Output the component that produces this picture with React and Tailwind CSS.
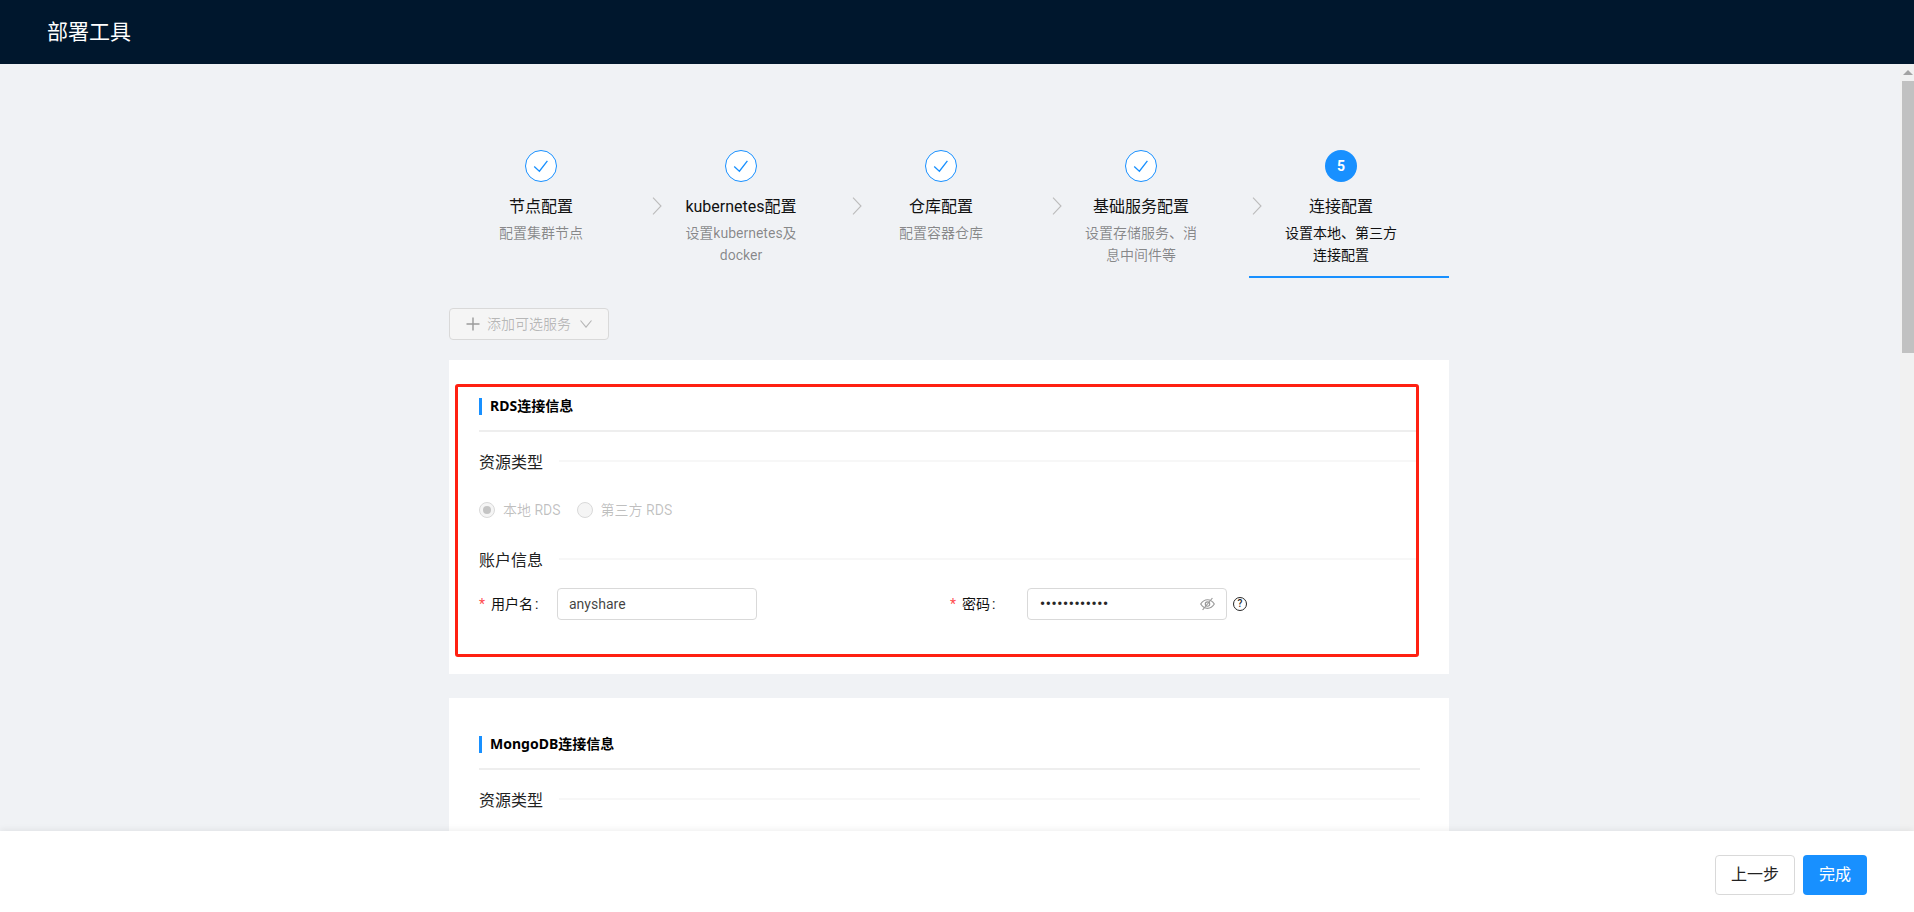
import React from "react";

const FONT = "font-['Roboto','Noto_Sans_CJK_SC',sans-serif]";

function Check() {
  return (
    <svg width="16" height="16" viewBox="0 0 16 16" fill="none" stroke="#1890ff" strokeWidth="1.3">
      <path d="M1.2 8.6 L6.4 13.2 L14.4 2.9" />
    </svg>
  );
}

function Chevron() {
  return (
    <svg width="10" height="18" viewBox="0 0 10 18" fill="none" stroke="#bcbcbc" strokeWidth="1.1">
      <path d="M1 0.6 L9 9 L1 17.4" />
    </svg>
  );
}

const STEPS = [
  { title: "节点配置", desc: "配置集群节点" },
  { title: "kubernetes配置", desc: "设置kubernetes及docker" },
  { title: "仓库配置", desc: "配置容器仓库" },
  { title: "基础服务配置", desc: "设置存储服务、消息中间件等" },
  { title: "连接配置", desc: "设置本地、第三方连接配置", active: true },
];

function Step({ step, index }) {
  return (
    <div className={`flex w-[200px] h-[128px] ${step.active ? "border-b-2 border-[#1890ff]" : ""}`}>
      <div className="w-4 flex-none pt-[47px] flex justify-center">{index > 0 && <Chevron />}</div>
      <div className="w-[152px] flex-none flex flex-col items-center">
        {step.active ? (
          <div className="w-8 h-8 rounded-full bg-[#1890ff] flex items-center justify-center text-white text-sm font-bold">
            5
          </div>
        ) : (
          <div className="w-8 h-8 rounded-full bg-white border border-[#1890ff] flex items-center justify-center">
            <Check />
          </div>
        )}
        <div className="mt-[13px] text-base leading-6 text-[#111111] whitespace-nowrap">{step.title}</div>
        <div className={`mt-[3px] w-[120px] text-center text-sm leading-[22px] break-words ${step.active ? "text-[#111111]" : "text-black/45"}`}>
          {step.desc}
        </div>
      </div>
    </div>
  );
}

function SectionHeading({ children }) {
  return (
    <div className="flex items-center gap-4 h-6">
      <div className="text-base leading-6 text-[#222222] whitespace-nowrap translate-y-[1px]">{children}</div>
      <div className="flex-1 h-[2px] bg-[#f7f7f7] -translate-y-[1px]" />
    </div>
  );
}

function CardTitle({ children }) {
  return (
    <>
      <div className="flex items-center h-[17px] border-l-[3px] border-[#1890ff] pl-2">
        <span className="font-['Noto_Sans','Noto_Sans_CJK_SC',sans-serif] text-sm font-bold text-black leading-[17px] -translate-y-[1px]">{children}</span>
      </div>
      <div className="mt-[15px] h-[2px] bg-[#eeeeee]" />
    </>
  );
}

function Radio({ checked, label }) {
  return (
    <div className="flex items-center gap-2">
      <div className="w-4 h-4 rounded-full border border-[#d9d9d9] bg-[#f5f5f5] flex items-center justify-center">
        {checked && <div className="w-2 h-2 rounded-full bg-black/20" />}
      </div>
      <span className="text-sm leading-[22px] text-black/25 whitespace-nowrap">{label}</span>
    </div>
  );
}

function Label({ children }) {
  return (
    <div className="flex items-center text-sm text-[#111111] whitespace-nowrap">
      <span className="text-[#ff4d4f] w-3 text-sm leading-none">*</span>
      <span>{children}</span>
      <span className="ml-[2px]">:</span>
    </div>
  );
}

function EyeOff() {
  return (
    <svg width="15" height="14" viewBox="0 0 15 14" fill="none" stroke="#999999" strokeWidth="1.15">
      <path d="M0.7 7 C2.8 3.7 5.2 2.7 7.5 2.7 C9.8 2.7 12.2 3.7 14.3 7 C12.2 10.3 9.8 11.3 7.5 11.3 C5.2 11.3 2.8 10.3 0.7 7 Z" />
      <circle cx="7.5" cy="7" r="2.2" />
      <path d="M2.6 13 L12.4 1" />
    </svg>
  );
}

function Help() {
  return (
    <div className="w-[14px] h-[14px] rounded-full border border-[#262626] flex items-center justify-center text-[10px] font-medium leading-none text-[#262626]">
      ?
    </div>
  );
}

export default function App() {
  return (
    <div className={`h-[912px] w-full overflow-hidden flex flex-col bg-[#f0f2f5] ${FONT}`}>
      <header className="h-16 flex-none bg-[#00172d] flex items-center pl-[47px] pt-[2px]">
        <span className="text-[21px] text-white">部署工具</span>
      </header>

      <div className="flex-1 min-h-0 flex">
        <main className="flex-1 min-w-0 overflow-hidden pt-[86px] pl-[449px]">
          <div className="w-[1000px]">
            <div className="flex">
              {STEPS.map((s, i) => (
                <Step key={s.title} step={s} index={i} />
              ))}
            </div>

            <div className="mt-[30px] w-[160px] h-8 rounded-sm border border-[#d9d9d9] bg-[#f5f5f5] flex items-center text-sm text-black/25">
              <svg className="ml-4 mr-[7px]" width="14" height="14" viewBox="0 0 14 14" fill="none" stroke="#9a9a9a" strokeWidth="1.4">
                <path d="M7 0.5 V13.5 M0.5 7 H13.5" />
              </svg>
              <span>添加可选服务</span>
              <svg className="ml-[9px]" width="12" height="8" viewBox="0 0 12 8" fill="none" stroke="#b5b5b5" strokeWidth="1.1">
                <path d="M0.5 0.5 L6 7.2 L11.5 0.5" />
              </svg>
            </div>

            <section className="relative mt-5 bg-white h-[314px] pl-[30px] pr-[30px] pt-[38px]">
              <div className="absolute z-10 left-[6px] top-6 w-[964px] h-[273px] border-[3px] border-[#ff2012] rounded-[3px]" />
              <CardTitle>RDS连接信息</CardTitle>
              <div className="mt-[18px]">
                <SectionHeading>资源类型</SectionHeading>
              </div>
              <div className="mt-[25px] flex gap-4 h-[22px] items-center">
                <Radio checked label="本地 RDS" />
                <Radio label="第三方 RDS" />
              </div>
              <div className="mt-[27px]">
                <SectionHeading>账户信息</SectionHeading>
              </div>
              <div className="mt-4 flex h-8 items-center">
                <div className="w-[78px] flex-none">
                  <Label>用户名</Label>
                </div>
                <div className="w-[200px] h-8 flex-none rounded-sm border border-[#d9d9d9] flex items-center pl-[11px] pr-3 text-sm text-black/75">
                  anyshare
                </div>
                <div className="w-[193px] flex-none" />
                <div className="w-[77px] flex-none">
                  <Label>密码</Label>
                </div>
                <div className="w-[200px] h-8 flex-none rounded-sm border border-[#d9d9d9] flex items-center justify-between pl-3 pr-[11px]">
                  <span className="text-sm leading-none font-bold text-[#262626] tracking-[0.7px]">••••••••••••</span>
                  <EyeOff />
                </div>
                <div className="ml-[6px]">
                  <Help />
                </div>
              </div>
            </section>

            <section className="mt-6 bg-white h-[314px] pl-[30px] pr-[29px] pt-[38px]">
              <CardTitle>MongoDB连接信息</CardTitle>
              <div className="mt-[18px]">
                <SectionHeading>资源类型</SectionHeading>
              </div>
            </section>
          </div>
        </main>

        <aside className="w-[14px] flex-none bg-[#f1f1f1] flex flex-col pl-[2px]">
          <div className="h-[17px] flex items-center justify-center">
            <div className="w-0 h-0 border-x-[5px] border-x-transparent border-b-[5px] border-b-[#a3a3a3]" />
          </div>
          <div className="h-[272px] bg-[#c1c1c1]" />
        </aside>
      </div>

      <footer className="relative h-[81px] flex-none bg-white shadow-[0_-2px_6px_rgba(0,0,0,0.06)] flex items-start justify-end pt-6 pr-[47px] gap-2">
        <button className="w-20 h-10 rounded-sm border border-[#d9d9d9] bg-white text-base text-[#222222]">上一步</button>
        <button className="w-16 h-10 rounded-sm bg-[#1890ff] text-base text-white">完成</button>
      </footer>
    </div>
  );
}
